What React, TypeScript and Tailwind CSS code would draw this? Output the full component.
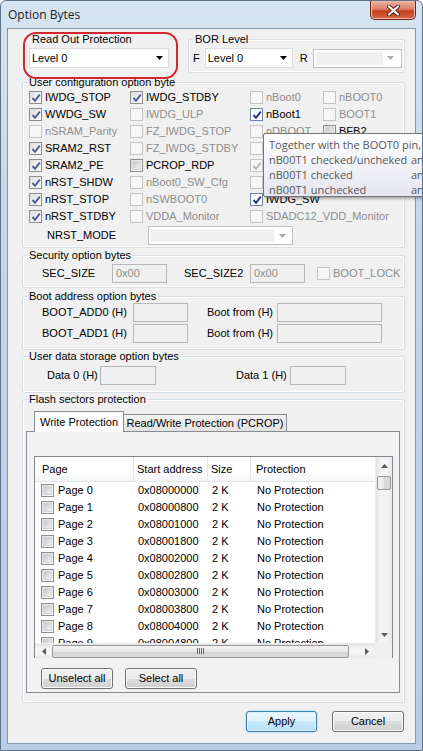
import React from "react";

type BoxProps = { on?: boolean; off?: boolean; dark?: boolean };

// Win7 style checkbox
function Box({ on = false, off = false, dark = false }: BoxProps) {
  const frame = off
    ? "border-[#c4c4c4] bg-[#f7f7f7]"
    : dark
    ? "border-[#6e86a8] bg-white"
    : "border-[#8f8f8f] bg-[linear-gradient(135deg,#dedede,#fbfbfb)]";
  const tick = off ? "#b4b4b4" : dark ? "#1f3589" : "#4b5f98";
  return (
    <span className={`flex h-[13px] w-[13px] shrink-0 items-center justify-center border ${frame}`}>
      {!on && !off && (
        <span className="h-[9px] w-[9px] border border-[#d6d6d6] bg-[linear-gradient(135deg,#c4c7cc,#f2f2f2)]" />
      )}
      {on && (
        <svg width="10" height="10" viewBox="0 0 10 10">
          <path d="M1.5 5 L4 7.8 L8.8 1.6" fill="none" stroke={tick} strokeWidth="1.9" />
        </svg>
      )}
    </span>
  );
}

type OptT = { label: string; on?: boolean; off?: boolean; dark?: boolean };

function Opt({ label, on, off, dark }: OptT) {
  return (
    <div className="flex h-[17px] items-center">
      <Box on={on} off={off} dark={dark} />
      <span className={`ml-[3px] whitespace-nowrap ${off ? "text-[#8d8d8d]" : "text-black"}`}>{label}</span>
    </div>
  );
}

function Arrow({ dir = "down", color = "#000" }: { dir?: "down" | "up" | "left" | "right"; color?: string }) {
  const pts =
    dir === "down" ? "0,0 7,0 3.5,4" : dir === "up" ? "0,4 7,4 3.5,0" : dir === "left" ? "4,0 4,7 0,3.5" : "0,0 0,7 4,3.5";
  const w = dir === "down" || dir === "up" ? 7 : 4;
  const h = dir === "down" || dir === "up" ? 4 : 7;
  return (
    <svg width={w} height={h} viewBox={`0 0 ${w} ${h}`}>
      <polygon points={pts} fill={color} />
    </svg>
  );
}

function Combo({ text, w, off = false }: { text?: string; w: string; off?: boolean }) {
  if (off) {
    return (
      <div className={`${w} flex h-[19px] items-center border border-[#c2c2c2] bg-white p-[2px]`}>
        <div className="h-full flex-1 bg-[#f0f0f0]" />
        <div className="flex w-[16px] justify-center">
          <Arrow color="#a9a9a9" />
        </div>
      </div>
    );
  }
  return (
    <div className={`${w} flex h-[20px] items-center border border-[#dcdcdc] bg-white pl-[2px]`}>
      <span className="flex-1">{text}</span>
      <div className="flex w-[17px] justify-center">
        <Arrow />
      </div>
    </div>
  );
}

function Field({ w, text }: { w: string; text?: string }) {
  return (
    <div className={`${w} flex h-[19px] items-center border border-[#b7b7b7] bg-[#f0f0f0] pl-[3px] text-[#8d8d8d]`}>
      {text}
    </div>
  );
}

function Btn({ label, w, main = false }: { label: string; w: string; main?: boolean }) {
  const look = main
    ? "border-[#3c7fb1] bg-[linear-gradient(#ecf7fd_0%,#dff2fc_50%,#c9eafc_50%,#b3def6_100%)] shadow-[inset_0_0_0_1px_#dff3fe,0_0_2px_#6cc8f5]"
    : "border-[#707070] bg-[linear-gradient(#f2f2f2_0%,#ebebeb_50%,#dddddd_50%,#cfcfcf_100%)] shadow-[inset_0_0_0_1px_#fcfcfc]";
  return (
    <div className={`${w} flex h-[21px] items-center justify-center rounded-[3px] border ${look}`}>{label}</div>
  );
}

function Group({ title, children, className = "" }: { title: string; children: React.ReactNode; className?: string }) {
  return (
    <fieldset className={`rounded-[3px] border border-[#d5dfe5] shadow-[inset_0_0_0_1px_#ffffff] ${className}`}>
      <legend className="ml-[5px] px-[1px] leading-[13px]">{title}</legend>
      {children}
    </fieldset>
  );
}

const col1: OptT[] = [
  { label: "IWDG_STOP", on: true },
  { label: "WWDG_SW", on: true },
  { label: "nSRAM_Parity", off: true },
  { label: "SRAM2_RST", on: true },
  { label: "SRAM2_PE", on: true },
  { label: "nRST_SHDW", on: true },
  { label: "nRST_STOP", on: true },
  { label: "nRST_STDBY", on: true },
];
const col2: OptT[] = [
  { label: "IWDG_STDBY", on: true },
  { label: "IWDG_ULP", off: true },
  { label: "FZ_IWDG_STOP", off: true },
  { label: "FZ_IWDG_STDBY", off: true },
  { label: "PCROP_RDP" },
  { label: "nBoot0_SW_Cfg", off: true },
  { label: "nSWBOOT0", off: true },
  { label: "VDDA_Monitor", off: true },
];
const col3: OptT[] = [
  { label: "nBoot0", off: true },
  { label: "nBoot1", on: true, dark: true },
  { label: "nDBOOT", off: true },
  { label: "nBOOT_SEL", off: true },
  { label: "DB1M", on: true, off: true },
  { label: "DBANK", off: true },
  { label: "IWDG_SW", on: true, dark: true },
  { label: "SDADC12_VDD_Monitor", off: true },
];
const col4: OptT[] = [
  { label: "nBOOT0", off: true },
  { label: "BOOT1", off: true },
  { label: "BFB2" },
];

const pages = Array.from({ length: 10 }, (_, i) => ({
  name: `Page ${i}`,
  addr: "0x" + (0x08000000 + i * 0x800).toString(16).toUpperCase().padStart(8, "0"),
}));

function VScroll() {
  return (
    <div className="flex w-[17px] flex-col border-l border-[#ececec] bg-[linear-gradient(90deg,#e3e3e3,#f4f4f4_30%,#f4f4f4_70%,#e8e8e8)]">
      <div className="flex h-[17px] items-center justify-center">
        <Arrow dir="up" color="#5b5b5b" />
      </div>
      <div className="mx-[1px] mt-[2px] h-[14px] rounded-[2px] border border-[#979797] bg-[linear-gradient(90deg,#f3f3f3,#e7e7e7_50%,#d5d5d5_50%,#d9d9d9)]" />
      <div className="flex-1" />
      <div className="flex h-[17px] items-center justify-center">
        <Arrow color="#5b5b5b" />
      </div>
    </div>
  );
}

function HScroll() {
  return (
    <div className="flex h-[15px] flex-1 items-center border-t border-[#ececec] bg-[linear-gradient(#e3e3e3,#f4f4f4_30%,#f4f4f4_70%,#e8e8e8)]">
      <div className="flex w-[17px] justify-center">
        <Arrow dir="left" color="#5b5b5b" />
      </div>
      <div className="flex h-[13px] w-[297px] items-center justify-center rounded-[2px] border border-[#979797] bg-[linear-gradient(#f3f3f3,#e7e7e7_50%,#d5d5d5_50%,#d9d9d9)]">
        <div className="flex gap-[1px]">
          <span className="h-[6px] w-[1px] bg-[#6a6a6a]" />
          <span className="h-[6px] w-[1px] bg-[#6a6a6a]" />
          <span className="h-[6px] w-[1px] bg-[#6a6a6a]" />
          <span className="h-[6px] w-[1px] bg-[#6a6a6a]" />
        </div>
      </div>
      <div className="flex-1" />
      <div className="flex w-[17px] justify-center">
        <Arrow dir="right" color="#5b5b5b" />
      </div>
    </div>
  );
}

function PageList() {
  return (
    <div className="flex h-[202px] w-[359px] flex-col border border-[#828790] bg-white">
      <div className="flex h-[186px]">
        <div className="flex flex-1 flex-col overflow-hidden">
          <div className="grid h-[25px] shrink-0 grid-cols-[99px_74px_43px_1fr] border-b border-[#e5e5e5] bg-[linear-gradient(#ffffff_60%,#f3f4f6)]">
            <div className="flex items-center border-r border-[#e5e5e5] pl-[7px]">Page</div>
            <div className="flex items-center border-r border-[#e5e5e5] pl-[3px]">Start address</div>
            <div className="flex items-center border-r border-[#e5e5e5] pl-[3px]">Size</div>
            <div className="flex items-center pl-[5px]">Protection</div>
          </div>
          {pages.map((p) => (
            <div key={p.name} className="grid h-[17px] shrink-0 grid-cols-[99px_74px_43px_1fr] items-center">
              <div className="flex items-center pl-[6px]">
                <Box />
                <span className="ml-[4px]">{p.name}</span>
              </div>
              <div className="pl-[4px]">{p.addr}</div>
              <div className="pl-[4px]">2 K</div>
              <div className="pl-[6px]">No Protection</div>
            </div>
          ))}
        </div>
        <VScroll />
      </div>
      <div className="flex">
        <HScroll />
        <div className="h-[15px] w-[17px] bg-[#f0f0f0]" />
      </div>
    </div>
  );
}

export default function App() {
  return (
    <div className="relative flex h-[751px] w-[423px] flex-col overflow-hidden rounded-t-[6px] border border-[#5f7488] bg-[linear-gradient(180deg,#d6e4f1_0%,#c3d7eb_30%,#b6cde5_100%)] font-['Liberation_Sans',Arial,sans-serif] text-[11px] text-black">
      {/* title bar */}
      <div className="flex h-[27px] shrink-0 items-start justify-between">
        <div className="pl-[7px] pt-[6px] font-['Open_Sans',sans-serif] text-[12px] leading-[16px] text-[#1e1e1e]">
          Option Bytes
        </div>
        <div className="mr-[6px] flex h-[19px] w-[46px] items-center justify-center rounded-b-[5px] border border-t-0 border-[#6b2418] bg-[linear-gradient(#eab2a5_0%,#de7f69_45%,#c5401f_55%,#d56845_100%)] shadow-[inset_0_0_0_1px_#f0b8a8]">
          <svg width="13" height="11" viewBox="0 0 13 11">
            <path d="M2 1.5 L11 9.5 M11 1.5 L2 9.5" stroke="#5a1a10" strokeWidth="4" strokeLinecap="round" />
            <path d="M2 1.5 L11 9.5 M11 1.5 L2 9.5" stroke="#ffffff" strokeWidth="2.2" strokeLinecap="round" />
          </svg>
        </div>
      </div>

      {/* client area */}
      <div className="mx-[6px] mb-[6px] flex flex-1 flex-col border border-[#8597ab] bg-[#f0f0f0]">
        {/* top row */}
        <div className="mt-[4px] flex items-start pl-[17px]">
          <Group title="Read Out Protection" className="w-[151px] border-transparent shadow-none">
            <div className="mt-[2px] pb-[4px] pl-[3px]">
              <Combo text="Level 0" w="w-[140px]" />
            </div>
          </Group>
          <Group title="BOR Level" className="ml-[12px] w-[217px]">
            <div className="mt-[2px] flex items-center pb-[4px] pl-[4px]">
              <span>F</span>
              <div className="ml-[5px]">
                <Combo text="Level 0" w="w-[88px]" />
              </div>
              <span className="ml-[7px]">R</span>
              <div className="ml-[5px]">
                <Combo off w="w-[89px]" />
              </div>
            </div>
          </Group>
        </div>

        {/* user configuration */}
        <Group title="User configuration option byte" className="ml-[14px] mr-[10px] mt-[3px]">
          <div className="flex pl-[6px]">
            {[col1, col2, col3, col4].map((col, ci) => (
              <div
                key={ci}
                className={`flex flex-col ${ci === 0 ? "w-[101px]" : ci === 1 ? "w-[120px]" : ci === 2 ? "w-[73px]" : "flex-1"}`}
              >
                {col.map((o) => (
                  <Opt key={o.label} {...o} />
                ))}
              </div>
            ))}
          </div>
          <div className="mt-[1px] flex items-center pb-[2px] pl-[24px]">
            <span className="w-[101px]">NRST_MODE</span>
            <Combo off w="w-[145px]" />
          </div>
        </Group>

        {/* security */}
        <Group title="Security option bytes" className="ml-[14px] mr-[10px] mt-[1px]">
          <div className="mt-[2px] flex items-center pb-[4px] pl-[19px]">
            <span className="w-[70px]">SEC_SIZE</span>
            <Field w="w-[55px]" text="0x00" />
            <span className="ml-[17px] w-[66px]">SEC_SIZE2</span>
            <Field w="w-[55px]" text="0x00" />
            <div className="ml-[12px] flex items-center">
              <Box off />
              <span className="ml-[3px] text-[#8d8d8d]">BOOT_LOCK</span>
            </div>
          </div>
        </Group>

        {/* boot address */}
        <Group title="Boot address option bytes" className="ml-[14px] mr-[10px] mt-[2px]">
          <div className="flex flex-col gap-[2px] pb-[6px] pl-[19px]">
            {["BOOT_ADD0 (H)", "BOOT_ADD1 (H)"].map((l) => (
              <div key={l} className="flex items-center">
                <span className="w-[91px]">{l}</span>
                <Field w="w-[55px]" />
                <span className="ml-[19px] w-[70px]">Boot from (H)</span>
                <Field w="w-[105px]" />
              </div>
            ))}
          </div>
        </Group>

        {/* user data */}
        <Group title="User data storage option bytes" className="ml-[14px] mr-[10px]">
          <div className="mt-[3px] flex items-center pb-[7px] pl-[24px]">
            <span className="w-[53px]">Data 0 (H)</span>
            <Field w="w-[56px]" />
            <span className="ml-[80px] w-[54px]">Data 1 (H)</span>
            <Field w="w-[56px]" />
          </div>
        </Group>

        {/* flash sectors */}
        <Group title="Flash sectors protection" className="ml-[14px] mr-[10px]">
          <div className="pb-[9px] pl-[3px] pr-[4px] pt-[5px]">
            <div className="flex h-[20px] items-end pl-[8px]">
              <div className="relative z-10 -mb-px flex h-[21px] w-[90px] items-center justify-center border border-b-0 border-[#898c95] bg-white">
                Write Protection
              </div>
              <div className="flex h-[17px] w-[163px] items-center justify-center border border-b-0 border-l-0 border-[#898c95] bg-[linear-gradient(#f3f3f3,#e3e3e3)]">
                Read/Write Protection (PCROP)
              </div>
            </div>
            <div className="border border-[#898c95] bg-[#f2f2f2] pb-[3px] pl-[7px] pt-[24px]">
              <PageList />
              <div className="mt-[10px] flex pl-[7px]">
                <Btn label="Unselect all" w="w-[72px]" />
                <div className="ml-[12px]">
                  <Btn label="Select all" w="w-[72px]" />
                </div>
              </div>
            </div>
          </div>
        </Group>

        <div className="mr-[11px] mt-[8px] flex justify-end gap-[15px]">
          <Btn label="Apply" w="w-[71px]" main />
          <Btn label="Cancel" w="w-[72px]" />
        </div>
      </div>

      {/* red annotation ring */}
      <div className="pointer-events-none absolute left-[22px] top-[31px] h-[47px] w-[155px] rounded-[13px] border-2 border-[#d4262e]" />

      {/* tooltip */}
      <div className="absolute left-[262px] top-[132px] h-[64px] w-[260px] rounded-[2px] border border-[#767676] bg-[linear-gradient(#ffffff,#e4e5f0)] pl-[5px] pt-[3px] font-['Open_Sans',sans-serif] text-[11px] leading-[15px] text-[#575757] shadow-[2px_2px_3px_rgba(0,0,0,0.3)]">
        <div className="whitespace-nowrap">Together with the BOOT0 pin, selects the boot mode</div>
        <div className="flex whitespace-nowrap">
          <span className="w-[142px]">nB00T1 checked/uncheked</span>
          <span>and BOOT0 = 0</span>
        </div>
        <div className="flex whitespace-nowrap">
          <span className="w-[142px]">nB00T1 checked</span>
          <span>and BOOT0 = 1</span>
        </div>
        <div className="flex whitespace-nowrap">
          <span className="w-[142px]">nB00T1 unchecked</span>
          <span>and BOOT0 = 1</span>
        </div>
      </div>
    </div>
  );
}
